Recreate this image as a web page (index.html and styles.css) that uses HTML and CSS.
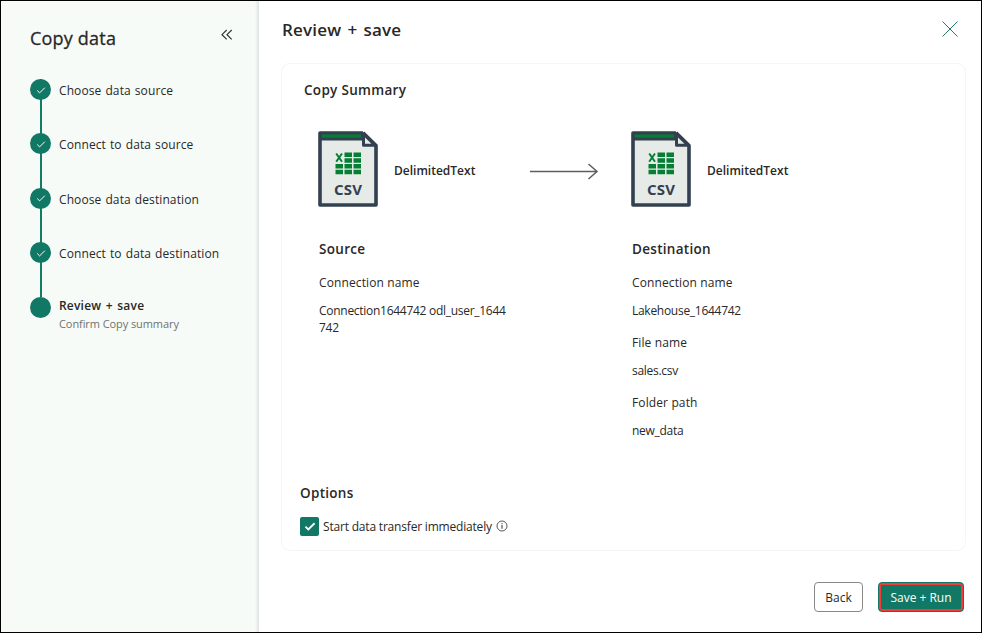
FILE: index.html
```html
<!DOCTYPE html>
<html lang="en">
<head>
<meta charset="utf-8">
<title>Copy data</title>
<link rel="stylesheet" href="styles.css">
</head>
<body>
<svg class="defs">
  <symbol id="csv" viewBox="0 0 60 76">
    <path d="M2 2H45L58 15V74H2Z" fill="#e6ebe8"/>
    <path d="M2 2H45V9.500H2Z" fill="#33404f"/>
    <path d="M3.500 3.500H43V6.500H3.500Z" fill="#067f35"/>
    <path d="M45 1.800L58 14.500V74H2V2H45" fill="none" stroke="#33404f" stroke-width="3.600" stroke-linejoin="round"/>
    <path d="M3.800 3.400H43V6.200H3.800Z" fill="#067f35"/>
    <path d="M45.500 3V14.200H57Z" fill="#e6ebe8" stroke="#33404f" stroke-width="3" stroke-linejoin="round"/>
    <path d="M26.500 21.500h7.500v4.600h-7.500zM35.500 21.500h7.500v4.600h-7.500zM26.500 27.200h7.500v4.600h-7.500zM35.500 27.200h7.500v4.600h-7.500zM17.500 33h7.500v4.600h-7.500zM26.500 33h7.500v4.600h-7.500zM35.500 33h7.500v4.600h-7.500zM17.500 38.700h7.500v4.600h-7.500zM26.500 38.700h7.500v4.600h-7.500zM35.500 38.700h7.500v4.600h-7.500z" fill="#067f35"/>
    <path d="M18.200 22.500L24 30.800M24 22.500L18.200 30.800" stroke="#067f35" stroke-width="2" fill="none"/>
    <text x="16" y="64" textLength="28" class="csv-label">CSV</text>
  </symbol>
  <symbol id="tick" viewBox="0 0 10 10"><path d="M1.200 5.500L3.600 7.900L8.800 2.700" fill="none" stroke="currentColor"/></symbol>
</svg>
<div class="window">
  <aside class="sidebar">
    <header class="side-head">
      <h1>Copy data</h1>
      <svg class="collapse" width="12" height="12" viewBox="0 0 12 12"><path d="M5.700 1L1 5.700L5.700 10.400M10.700 1L6 5.700L10.700 10.400" fill="none" stroke="#333" stroke-width="1.200"/></svg>
    </header>
    <ol class="steps">
      <li><span class="dot"><svg><use href="#tick"/></svg></span><span class="name">Choose data source</span></li>
      <li><span class="dot"><svg><use href="#tick"/></svg></span><span class="name">Connect to data source</span></li>
      <li><span class="dot"><svg><use href="#tick"/></svg></span><span class="name">Choose data destination</span></li>
      <li><span class="dot"><svg><use href="#tick"/></svg></span><span class="name">Connect to data destination</span></li>
      <li class="current"><span class="dot"></span><div><strong class="name">Review + save</strong><span class="hint">Confirm Copy summary</span></div></li>
    </ol>
  </aside>
  <main>
    <header class="main-head">
      <h2>Review + save</h2>
      <svg width="18" height="18" viewBox="0 0 18 18"><path d="M1.500 1.500L16.500 16.500M16.500 1.500L1.500 16.500" stroke="#227c6b" stroke-width="1"/></svg>
    </header>
    <section class="card">
      <h3 class="summary-title">Copy Summary</h3>
      <div class="flow">
        <svg class="file"><use href="#csv"/></svg>
        <strong>DelimitedText</strong>
        <svg class="arrow" width="70" height="18" viewBox="0 0 70 18"><path d="M0 9.500H67M58.500 2L67 9.500L58.500 17" fill="none" stroke="#605e5c" stroke-width="1.500"/></svg>
        <svg class="file"><use href="#csv"/></svg>
        <strong>DelimitedText</strong>
      </div>
      <div class="columns">
        <div>
          <h3>Source</h3>
          <dl><dt>Connection name</dt><dd>Connection1644742 odl_user_1644<br>742</dd></dl>
        </div>
        <div>
          <h3>Destination</h3>
          <dl><dt>Connection name</dt><dd>Lakehouse_1644742</dd><dt>File name</dt><dd>sales.csv</dd><dt>Folder path</dt><dd>new_data</dd></dl>
        </div>
      </div>
      <div class="options">
        <h3>Options</h3>
        <div class="option"><span class="check"><svg><use href="#tick"/></svg></span><span class="option-text">Start data transfer immediately</span><svg class="info" width="12" height="12" viewBox="0 0 12 12"><circle cx="6" cy="6" r="5" fill="none" stroke="#444" stroke-width=".9"/><path d="M6 3.200V4.200M6 5V8.800" stroke="#333"/></svg></div>
      </div>
    </section>
    <footer><button class="back">Back</button><button class="run">Save + Run</button></footer>
  </main>
</div>
</body>
</html>
```
FILE: styles.css
```css
* { box-sizing: border-box; }
body { margin: 0; font: 12px/16px "Open Sans", "Noto Sans", sans-serif; color: #292827; background: #fff; }
h1, h2, h3, ol, dl, dd { margin: 0; padding: 0; }
.defs { display: none; }
.csv-label { font: 700 15px "Open Sans", sans-serif; fill: #33404f; }
.window { width: 982px; height: 633px; border: 1px solid #000; display: flex; overflow: hidden; }
.sidebar { width: 258px; background: linear-gradient(to right, #f6fbf8 254px, #dfe4e2 258px); padding-left: 29px; }
.side-head { display: flex; justify-content: space-between; align-items: flex-start; padding: 24px 26px 0 0; height: 78px; }
h1 { font-size: 18px; line-height: 26px; font-weight: 500; letter-spacing: .2px; -webkit-text-stroke: .3px; }
.collapse { margin-top: 4px; }
.steps { list-style: none; }
.steps li { height: 54.4px; display: flex; gap: 8px; background: linear-gradient(#117d66, #117d66) 10px 0 / 2px 100% no-repeat; }
.steps li.current { background: none; }
.dot { width: 21px; height: 21px; flex: none; border-radius: 50%; background: #117865; color: #fff; display: flex; align-items: center; justify-content: center; }
.dot svg { width: 10px; height: 10px; stroke-width: 1; }
.name { display: block; padding-top: 4px; white-space: nowrap; letter-spacing: .1px; word-spacing: .8px; }
.current .name { padding-top: 1px; font-weight: 600; letter-spacing: .2px; word-spacing: 1.2px; }
.hint { display: block; font-size: 11px; line-height: 16px; margin-top: 2px; color: #73716f; white-space: nowrap; letter-spacing: -.08px; }
main { width: 722px; padding: 0 15px 0 22px; }
.main-head { height: 62px; padding: 16px 7px 0 1px; display: flex; justify-content: space-between; }
.main-head svg { margin-top: 3px; }
h2 { font-size: 17px; line-height: 26px; font-weight: 600; letter-spacing: .2px; word-spacing: 1.5px; }
h3 { font-size: 13.500px; line-height: 20px; font-weight: 600; letter-spacing: .3px; }
.card { height: 488px; border: 1px solid #f5f5f5; border-radius: 9px; padding: 16px 19px 0 18px; }
.summary-title { padding-left: 4px; }
.flow { display: flex; align-items: center; margin-top: 31px; padding-left: 18px; }
.flow strong { width: 82px; margin: 3px 0 0 16px; font-weight: 600; white-space: nowrap; }
.file { width: 60px; height: 76px; }
.arrow { margin: 3px 31px 0 54px; }
.columns { display: grid; grid-template-columns: 313px 1fr; padding-left: 19px; margin-top: 32px; height: 244px; }
dl { margin-top: 15px; line-height: 17px; }
dt { margin-bottom: 11px; letter-spacing: .12px; }
dd { margin-bottom: 15px; letter-spacing: -.28px; }
.option { display: flex; align-items: center; margin-top: 13px; height: 20px; }
.check { width: 19px; height: 19px; border-radius: 2px; background: #117865; color: #fff; display: flex; align-items: center; justify-content: center; margin-right: 4px; }
.check svg { width: 12px; height: 12px; stroke-width: 1.500; }
.option-text { padding-top: 2px; letter-spacing: -.19px; }
.info { margin-left: 4px; }
footer { display: flex; justify-content: flex-end; gap: 15px; padding: 31px 2px 0 0; }
button { height: 30px; border-radius: 4px; font: inherit; padding: 2px 0 0; }
.back { width: 49px; border: 1px solid #8a8886; background: #fff; color: #292827; }
.run { width: 86px; border: 1px solid #117865; background: #117865; color: #fff; box-shadow: inset 0 0 0 2px #f23c38; }
```
